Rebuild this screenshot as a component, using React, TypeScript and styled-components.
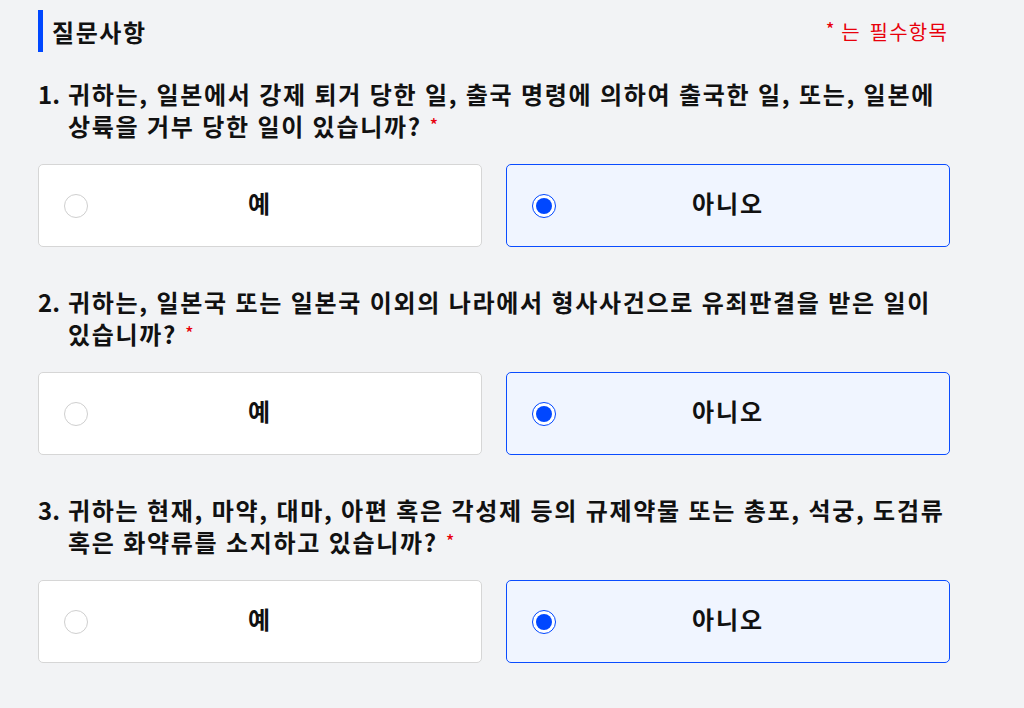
import styled, { createGlobalStyle } from "styled-components";
import { useState } from "react";

const GlobalStyle = createGlobalStyle`
  html, body {
    margin: 0;
    padding: 0;
    background: #f2f3f5;
  }
  body {
    font-family: "Noto Sans CJK KR", "Noto Sans", sans-serif;
    color: #111;
  }
`;

const Page = styled.div`
  padding: 10px 74px 40px 38px;
  min-height: 708px;
  box-sizing: border-box;
  background: #f2f3f5;
`;

const Header = styled.div`
  display: flex;
  align-items: center;
  justify-content: space-between;
  height: 42px;
  margin-bottom: 26px;
`;

const Title = styled.h2`
  display: flex;
  align-items: center;
  gap: 9px;
  margin: 0;
  font-size: 24px;
  font-weight: 700;
  letter-spacing: 1.6px;

  &::before {
    content: "";
    display: block;
    width: 5px;
    height: 42px;
    background: #0047ff;
  }
`;

const RequiredNote = styled.span`
  color: #e8000b;
  font-size: 20px;
  margin-right: 2px;
  letter-spacing: 1.2px;
  word-spacing: 3px;
`;

const Star = styled.span<{ $lead?: boolean }>`
  display: inline-block;
  color: #e8000b;
  font-size: 17px;
  line-height: 1;
  font-weight: 500;
  vertical-align: 4px;
  margin-left: ${({ $lead }) => ($lead ? "0" : "8px")};
  margin-right: ${({ $lead }) => ($lead ? "6px" : "0")};
`;

const Section = styled.section`
  margin-bottom: 39px;
`;

const Question = styled.div`
  display: flex;
  font-size: 24px;
  font-weight: 700;
  line-height: 32px;
  letter-spacing: 1.7px;
  word-spacing: 0.5px;
  word-break: keep-all;
  margin-bottom: 22px;
`;

const Num = styled.span`
  flex: 0 0 30px;
  letter-spacing: 0;
`;

const Options = styled.div`
  display: grid;
  grid-template-columns: 1fr 1fr;
  gap: 24px;
`;

const Option = styled.button<{ $checked: boolean }>`
  display: grid;
  grid-template-columns: 24px 1fr 24px;
  align-items: center;
  height: 83px;
  padding: 0 25px;
  box-sizing: border-box;
  border: 1px solid ${({ $checked }) => ($checked ? "#0a4cff" : "#d6d6d6")};
  border-radius: 5px;
  background: ${({ $checked }) => ($checked ? "#f0f5ff" : "#ffffff")};
  font-family: inherit;
  cursor: pointer;
`;

const Radio = styled.span<{ $checked: boolean }>`
  width: 24px;
  height: 24px;
  box-sizing: border-box;
  border-radius: 50%;
  border: 1px solid ${({ $checked }) => ($checked ? "#0047ff" : "#cfcfcf")};
  background: #fff;
  display: grid;
  place-items: center;

  &::after {
    content: "";
    width: 16px;
    height: 16px;
    border-radius: 50%;
    background: #0047ff;
    display: ${({ $checked }) => ($checked ? "block" : "none")};
  }
`;

const Label = styled.span`
  text-align: center;
  font-size: 24px;
  font-weight: 700;
  color: #111;
  letter-spacing: 2px;
  margin-bottom: 6px;
`;

const questions = [
  "귀하는, 일본에서 강제 퇴거 당한 일, 출국 명령에 의하여 출국한 일, 또는, 일본에 상륙을 거부 당한 일이 있습니까?",
  "귀하는, 일본국 또는 일본국 이외의 나라에서 형사사건으로 유죄판결을 받은 일이 있습니까?",
  "귀하는 현재, 마약, 대마, 아편 혹은 각성제 등의 규제약물 또는 총포, 석궁, 도검류 혹은 화약류를 소지하고 있습니까?",
];

export default function App() {
  const [answers, setAnswers] = useState<string[]>(["no", "no", "no"]);

  const pick = (i: number, v: string) =>
    setAnswers((prev) => prev.map((a, j) => (j === i ? v : a)));

  return (
    <>
      <GlobalStyle />
      <Page>
        <Header>
          <Title>질문사항</Title>
          <RequiredNote>
            <Star $lead>*</Star>는 필수항목
          </RequiredNote>
        </Header>

        {questions.map((q, i) => (
          <Section key={i}>
            <Question>
              <Num>{i + 1}.</Num>
              <span>
                {q}
                <Star>*</Star>
              </span>
            </Question>
            <Options>
              <Option $checked={answers[i] === "yes"} onClick={() => pick(i, "yes")}>
                <Radio $checked={answers[i] === "yes"} />
                <Label>예</Label>
              </Option>
              <Option $checked={answers[i] === "no"} onClick={() => pick(i, "no")}>
                <Radio $checked={answers[i] === "no"} />
                <Label>아니오</Label>
              </Option>
            </Options>
          </Section>
        ))}
      </Page>
    </>
  );
}
